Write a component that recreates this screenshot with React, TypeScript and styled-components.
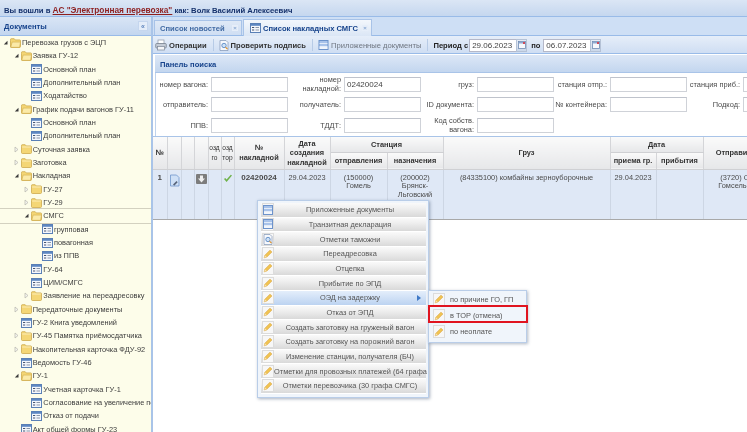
import { FC } from "react";
import styled, { createGlobalStyle } from "styled-components";

const GlobalStyle = createGlobalStyle`
  html, body {
    margin: 0;
    padding: 0;
    background: #fff;
  }
  * {
    box-sizing: border-box;
  }
  svg {
    flex: none;
  }
`;

const Page = styled.div`
  width: 747px;
  height: 432px;
  overflow: hidden;
  position: relative;
  display: flex;
  flex-direction: column;
  font-family: "Liberation Sans", Arial, sans-serif;
  font-size: 7.4px;
  color: #333;
  background: #fff;
  filter: blur(0.3px);
`;

const TopBar = styled.div`
  height: 17px;
  flex: none;
  display: flex;
  align-items: center;
  padding: 4px 0 0 4px;
  background: linear-gradient(#dbe6f5, #c5d7ef);
  border-bottom: 1px solid #99bbe8;
  font-weight: bold;
  font-size: 7.7px;
  color: #15316b;
  white-space: pre;
`;

const TopLink = styled.a`
  color: #8e1f1f;
  font-size: 8.3px;
  text-decoration: underline;
`;

const Body = styled.div`
  flex: 1;
  min-height: 0;
  display: flex;
`;

const Sidebar = styled.div`
  width: 151px;
  flex: none;
  display: flex;
  flex-direction: column;
  background: #fdfdea;
  overflow: hidden;
`;

const SideHead = styled.div`
  height: 19px;
  flex: none;
  display: flex;
  align-items: center;
  justify-content: space-between;
  padding: 0 3px 0 4px;
  background: linear-gradient(#d9e5f5, #c3d6ef);
  border-bottom: 1px solid #99bbe8;
  font-size: 7.6px;
  font-weight: bold;
  color: #15428b;
`;

const Collapse = styled.span`
  width: 10px;
  height: 10px;
  display: flex;
  align-items: center;
  justify-content: center;
  background: #e4edf9;
  border: 1px solid #c5d6ee;
  color: #5f86bd;
  font-size: 7px;
  line-height: 1;
`;

const Tree = styled.div`
  flex: 1;
  overflow: hidden;
`;

const TreeRow = styled.div<{ $level: number; $selected?: boolean }>`
  height: 13.33px;
  display: flex;
  align-items: center;
  white-space: nowrap;
  padding-left: ${(p) => 3 + p.$level * 10.67}px;
  color: #3c3c3c;
  box-shadow: ${(p) => (p.$selected ? "0 -1px 0 #d3d1c0, 0 1px 0 #d3d1c0" : "none")};
`;

const Arrow = styled.span`
  width: 7px;
  flex: none;
  display: flex;
  align-items: center;
`;

const TreeLabel = styled.span`
  margin-left: 1px;
`;

const Splitter = styled.div`
  width: 2px;
  flex: none;
  background: #a9c4e8;
`;

const Main = styled.div`
  flex: 1;
  min-width: 0;
  display: flex;
  flex-direction: column;
  overflow: hidden;
`;

const TabStrip = styled.div`
  height: 19px;
  flex: none;
  display: flex;
  align-items: flex-end;
  padding-left: 1px;
  gap: 1px;
  background: #cedff5;
  border-bottom: 1px solid #99bbe8;
`;

const Tab = styled.div<{ $active?: boolean }>`
  height: ${(p) => (p.$active ? 17 : 15)}px;
  width: ${(p) => (p.$active ? 129 : 88)}px;
  display: flex;
  align-items: center;
  gap: 2px;
  padding: 0 3px 0 ${(p) => (p.$active ? 6 : 5)}px;
  margin-bottom: ${(p) => (p.$active ? -1 : 0)}px;
  border: 1px solid #a8c3e8;
  border-bottom: none;
  background: ${(p) => (p.$active ? "linear-gradient(#f3f7fc, #dbe6f5)" : "linear-gradient(#dfe9f6, #cfdef3)")};
  font-size: 7.6px;
  font-weight: bold;
  color: ${(p) => (p.$active ? "#15428b" : "#416aa3")};
  white-space: nowrap;
`;

const TabClose = styled.span`
  margin-left: auto;
  width: 6px;
  height: 6px;
  display: flex;
  align-items: center;
  justify-content: center;
  font-size: 6px;
  line-height: 1;
  color: #8aa8d2;
  background: #e6eef9;
`;

const Toolbar = styled.div`
  height: 18px;
  flex: none;
  display: flex;
  align-items: center;
  padding: 1px 0 0 2px;
  background: linear-gradient(#e6eef9, #cfdef3);
  border-bottom: 1px solid #99bbe8;
  font-size: 7.6px;
  white-space: nowrap;
`;

const ToolButton = styled.span<{ $muted?: boolean }>`
  display: flex;
  align-items: center;
  gap: 2px;
  font-weight: ${(p) => (p.$muted ? "normal" : "bold")};
  color: ${(p) => (p.$muted ? "#6f7680" : "#333")};
`;

const ToolSep = styled.span`
  width: 1px;
  height: 12px;
  margin: 0 5px 0 6px;
  background: #b7cbe6;
`;

const PeriodLabel = styled.span<{ $gap: number; $tail: number }>`
  font-weight: bold;
  color: #222;
  margin: 0 ${(p) => p.$tail}px 0 ${(p) => p.$gap}px;
`;

const DateField = styled.span`
  width: 58px;
  height: 13px;
  display: flex;
  background: #fff;
  border: 1px solid #b5b8c8;
  align-items: center;
  padding-left: 2px;
  font-size: 8px;
  color: #444;
  position: relative;
`;

const DateTrigger = styled.span`
  position: absolute;
  right: -1px;
  top: -1px;
  width: 11px;
  height: 13px;
  display: flex;
  align-items: center;
  justify-content: center;
  background: linear-gradient(#e6edf7, #cbd8ea);
  border: 1px solid #b5c2d6;
`;

const SearchPanel = styled.div`
  flex: none;
  margin: 1px 0 0 2px;
  display: flex;
  flex-direction: column;
  width: 700px;
`;

const SearchHead = styled.div`
  height: 18px;
  display: flex;
  align-items: center;
  padding: 1px 0 0 5px;
  background: linear-gradient(#dce7f6, #c3d6ef);
  border-bottom: 1px solid #a9c4e8;
  font-size: 7.6px;
  font-weight: bold;
  color: #15428b;
`;

const SearchForm = styled.div`
  height: 63px;
  padding-top: 1px;
  display: grid;
  grid-template-columns: repeat(5, 56px 77px);
  grid-auto-rows: 20.5px;
  background: #fff;
  box-shadow: inset 1px 0 0 #c0d3ec;
`;

const FieldLabel = styled.label`
  display: flex;
  align-items: center;
  justify-content: flex-end;
  text-align: right;
  padding-right: 3px;
  line-height: 9px;
  color: #4a4a4a;
  white-space: pre-line;
`;

const FieldInput = styled.div`
  height: 15px;
  align-self: center;
  display: flex;
  align-items: center;
  padding-left: 2px;
  border: 1px solid #cfd2d8;
  border-top-color: #bfc3cc;
  background: #fff;
  font-size: 8px;
  color: #444;
`;

const GridWrap = styled.div`
  flex: 1;
  min-height: 0;
  overflow: hidden;
  border-top: 1px solid #a9c4e8;
`;

const Table = styled.table`
  table-layout: fixed;
  border-collapse: collapse;
  width: 624px;
`;

const HeadCell = styled.th<{ $h?: number }>`
  height: ${(p) => p.$h ?? 16}px;
  padding: 0 1px;
  text-align: center;
  font-size: 7.4px;
  font-weight: bold;
  color: #333;
  line-height: 9.5px;
  background: linear-gradient(#fafafa, #e6e7e9);
  border-right: 1px solid #d4d5d8;
  border-bottom: 1px solid #cfd0d3;
  white-space: pre-line;
`;

const ThinHeadCell = styled(HeadCell)`
  font-size: 6.6px;
  font-weight: normal;
  padding: 0;
`;

const BodyRow = styled.tr`
  height: 50px;
  background: #dfe8f6;
`;

const BodyCell = styled.td<{ $bold?: boolean }>`
  padding: 4px 1px 0;
  vertical-align: top;
  text-align: center;
  line-height: 8.7px;
  color: #4a4a4a;
  font-size: ${(p) => (p.$bold ? 8 : 7.4)}px;
  font-weight: ${(p) => (p.$bold ? "bold" : "normal")};
  border-right: 1px solid #cdd6e4;
  border-bottom: 1px solid #a8a8a8;
  overflow: hidden;
`;

const Menu = styled.div`
  position: absolute;
  left: 257px;
  top: 200px;
  width: 172px;
  padding: 2px 2px 3px 3px;
  display: flex;
  flex-direction: column;
  background: #f0f5fb;
  border: 1px solid #b9cde8;
  box-shadow: 1px 1px 3px rgba(60, 80, 110, 0.45);
`;

const MenuItem = styled.div<{ $active?: boolean }>`
  height: 14.67px;
  display: flex;
  align-items: center;
  position: relative;
  padding-left: 1px;
  background: ${(p) =>
    p.$active
      ? "linear-gradient(#e4eefb, #bcd3f1)"
      : "linear-gradient(#fafafa 0%, #eeeeee 40%, #d9d9d9 100%)"};
  border-bottom: 1px solid #fff;
  color: #555;
  white-space: nowrap;
`;

const MenuText = styled.span`
  flex: 1;
  text-align: center;
  font-size: 7.4px;
`;

const MenuArrow = styled.span`
  position: absolute;
  right: 5px;
  top: 4px;
  border-left: 4px solid #3f79c6;
  border-top: 3px solid transparent;
  border-bottom: 3px solid transparent;
`;

const IconBox = styled.span`
  width: 12px;
  height: 13px;
  flex: none;
  display: flex;
  align-items: center;
  justify-content: center;
  background: #f7f7f7;
  border: 1px solid #dcdcdc;
`;

const SubMenu = styled.div`
  position: absolute;
  left: 428px;
  top: 290px;
  width: 99px;
  height: 53px;
  padding: 0 0 0 2px;
  display: flex;
  flex-direction: column;
  background: #f0f5fb;
  border: 1px solid #b9cde8;
  box-shadow: 1px 1px 3px rgba(60, 80, 110, 0.4);
`;

const SubItem = styled.div`
  height: 16.4px;
  display: flex;
  align-items: center;
  gap: 5px;
  padding-left: 2px;
  color: #555;
  white-space: nowrap;
`;

const RedFrame = styled.div`
  position: absolute;
  left: 428px;
  top: 305px;
  width: 100px;
  height: 18px;
  border: 2px solid #e0141f;
`;

const FolderIcon: FC<{ open?: boolean }> = ({ open }) => (
  <svg width="11" height="10" viewBox="0 0 11 10">
    <path d="M.5 2.5V8.6c0 .5.3.9.9.9h8.2c.5 0 .9-.4.9-.9V2.6c0-.4-.3-.7-.7-.7H5.2L4.2.7H1.2C.8.7.5 1 .5 1.4z" fill="#f4d675" stroke="#c9a23f" strokeWidth=".7" />
    {open ? (
      <path d="M.8 9.3l1.3-5.2h8.4l-1 5.2z" fill="#fbeaa8" stroke="#c9a23f" strokeWidth=".5" />
    ) : (
      <path d="M1.2 3h8.6" stroke="#fdf1bf" strokeWidth=".9" />
    )}
  </svg>
);

const DocIcon: FC = () => (
  <svg width="11" height="10" viewBox="0 0 11 10">
    <rect x=".5" y=".5" width="10" height="9" fill="#f4f7fc" stroke="#5a80b6" />
    <rect x="1" y="1" width="9" height="1.8" fill="#5d87c2" />
    <path d="M2 4.5h2.2M2 7h2.2" stroke="#44536e" strokeWidth="1.1" />
    <path d="M5.5 4.5h3.5M5.5 7h3.5" stroke="#8b97aa" strokeWidth="1" />
  </svg>
);

const PencilIcon: FC = () => (
  <svg width="10" height="10" viewBox="0 0 10 10">
    <path d="M1.2 8.8l.8-2.6 5-5 1.8 1.8-5 5z" fill="#f2c552" stroke="#d39a2c" strokeWidth=".6" />
    <path d="M1.2 8.8l.8-2.6 1.8 1.8z" fill="#f6e2b4" />
  </svg>
);

const BlueListIcon: FC<{ width?: number }> = ({ width = 10 }) => (
  <svg width={width} height="10" viewBox="0 0 10 10">
    <rect x=".5" y=".5" width="9" height="9" fill="#a9c3ea" stroke="#6d93cb" />
    <path d="M1 3.5h8M1 6.5h8" stroke="#f2f6fc" strokeWidth=".8" />
    <rect x="1" y="7" width="8" height="2" fill="#f2f6fc" />
  </svg>
);

const CheckDocIcon: FC = () => (
  <svg width="10" height="11" viewBox="0 0 10 11">
    <path d="M1 .5h6l2 2v8H1z" fill="#f6f8fc" stroke="#7e93b5" strokeWidth=".7" />
    <circle cx="5" cy="5.5" r="2.2" fill="#cfe2f7" stroke="#4b7fc0" strokeWidth=".8" />
    <path d="M6.5 7.2l2 2" stroke="#d9902d" strokeWidth="1.2" />
  </svg>
);

const PrinterIcon: FC = () => (
  <svg width="12" height="12" viewBox="0 0 12 12">
    <rect x="3" y="1" width="6" height="4" fill="#fff" stroke="#8d97a6" strokeWidth=".7" />
    <rect x=".7" y="4.5" width="10.6" height="4.5" rx="1" fill="#c5ccd6" stroke="#6f7887" strokeWidth=".7" />
    <rect x="2.5" y="7.5" width="7" height="3.5" fill="#f4f5f7" stroke="#7d8696" strokeWidth=".7" />
  </svg>
);

const CalendarIcon: FC = () => (
  <svg width="8" height="8" viewBox="0 0 8 8">
    <rect x=".5" y=".5" width="7" height="7" fill="#f6f8fc" stroke="#6f8cb5" strokeWidth=".8" />
    <rect x="1" y="1" width="6" height="1.5" fill="#8eaad2" />
    <rect x="5" y="1" width="2" height="2" fill="#d04a5a" />
  </svg>
);

const AttachedIcon: FC = () => (
  <svg width="11" height="13" viewBox="0 0 11 13">
    <path d="M1.5 1h6l2.5 2.5V12H1.5z" fill="#cfe0f6" stroke="#6e96cc" strokeWidth=".8" />
    <path d="M4 10.5l3.5-3.5 1.2 1.2-3.5 3.5z" fill="#58647a" />
  </svg>
);

const DownIcon: FC = () => (
  <svg width="11" height="10" viewBox="0 0 11 10">
    <rect width="11" height="10" rx="1" fill="#7c7c7c" />
    <path d="M4 1.5h3v3h2L5.5 8.5 2 4.5h2z" fill="#eee" />
  </svg>
);

const CheckIcon: FC = () => (
  <svg width="10" height="9" viewBox="0 0 10 9">
    <path d="M1 5l2.6 3L9 1.5 7.8.8 3.6 5.4 2.2 3.9z" fill="#6fb24a" />
  </svg>
);

const TreeArrow: FC<{ open?: boolean }> = ({ open }) =>
  open ? (
    <svg width="5" height="5" viewBox="0 0 5 5">
      <path d="M4.5.8v3.7H.8z" fill="#3a3a3a" />
    </svg>
  ) : (
    <svg width="5" height="7" viewBox="0 0 5 7">
      <path d="M1 1l3 2.5L1 6z" fill="#f6f6f0" stroke="#b4b4ac" strokeWidth=".7" />
    </svg>
  );

type TreeNode = { label: string; level: number; kind: "open" | "closed" | "leaf"; selected?: boolean };

const tree: TreeNode[] = [
  { label: "Перевозка грузов с ЭЦП", level: 0, kind: "open" },
  { label: "Заявка ГУ-12", level: 1, kind: "open" },
  { label: "Основной план", level: 2, kind: "leaf" },
  { label: "Дополнительный план", level: 2, kind: "leaf" },
  { label: "Ходатайство", level: 2, kind: "leaf" },
  { label: "График подачи вагонов ГУ-11", level: 1, kind: "open" },
  { label: "Основной план", level: 2, kind: "leaf" },
  { label: "Дополнительный план", level: 2, kind: "leaf" },
  { label: "Суточная заявка", level: 1, kind: "closed" },
  { label: "Заготовка", level: 1, kind: "closed" },
  { label: "Накладная", level: 1, kind: "open" },
  { label: "ГУ-27", level: 2, kind: "closed" },
  { label: "ГУ-29", level: 2, kind: "closed" },
  { label: "СМГС", level: 2, kind: "open", selected: true },
  { label: "групповая", level: 3, kind: "leaf" },
  { label: "повагонная", level: 3, kind: "leaf" },
  { label: "из ППВ", level: 3, kind: "leaf" },
  { label: "ГУ-64", level: 2, kind: "leaf" },
  { label: "ЦИМ/СМГС", level: 2, kind: "leaf" },
  { label: "Заявление на переадресовку", level: 2, kind: "closed" },
  { label: "Передаточные документы", level: 1, kind: "closed" },
  { label: "ГУ-2 Книга уведомлений", level: 1, kind: "leaf" },
  { label: "ГУ-45 Памятка приёмосдатчика", level: 1, kind: "closed" },
  { label: "Накопительная карточка ФДУ-92", level: 1, kind: "closed" },
  { label: "Ведомость ГУ-46", level: 1, kind: "leaf" },
  { label: "ГУ-1", level: 1, kind: "open" },
  { label: "Учетная карточка ГУ-1", level: 2, kind: "leaf" },
  { label: "Согласование на увеличение подачи", level: 2, kind: "leaf" },
  { label: "Отказ от подачи", level: 2, kind: "leaf" },
  { label: "Акт общей формы ГУ-23", level: 1, kind: "leaf" },
];

const fields: [string, string][] = [
  ["номер вагона:", ""],
  ["номер\nнакладной:", "02420024"],
  ["груз:", ""],
  ["станция отпр.:", ""],
  ["станция приб.:", ""],
  ["отправитель:", ""],
  ["получатель:", ""],
  ["ID документа:", ""],
  ["№ контейнера:", ""],
  ["Подкод:", ""],
  ["ППВ:", ""],
  ["ТДДТ:", ""],
  ["Код собств.\nвагона:", ""],
];

const columns = [14, 14, 13, 14, 13, 13, 50, 46, 57, 56, 167, 46, 47, 74];

const menuItems: { label: string; icon: "list" | "check" | "pencil"; active?: boolean }[] = [
  { label: "Приложенные документы", icon: "list" },
  { label: "Транзитная декларация", icon: "list" },
  { label: "Отметки таможни", icon: "check" },
  { label: "Переадресовка", icon: "pencil" },
  { label: "Отцепка", icon: "pencil" },
  { label: "Прибытие по ЭПД", icon: "pencil" },
  { label: "ОЭД на задержку", icon: "pencil", active: true },
  { label: "Отказ от ЭПД", icon: "pencil" },
  { label: "Создать заготовку на груженый вагон", icon: "pencil" },
  { label: "Создать заготовку на порожний вагон", icon: "pencil" },
  { label: "Изменение станции, получателя (БЧ)", icon: "pencil" },
  { label: "Отметки для провозных платежей (64 графа", icon: "pencil" },
  { label: "Отметки перевозчика (30 графа СМГС)", icon: "pencil" },
];

const menuIcons = {
  list: <BlueListIcon />,
  check: <CheckDocIcon />,
  pencil: <PencilIcon />,
};

const subItems = ["по причине ГО, ГП", "в ТОР (отмена)", "по неоплате"];

function FieldGroup({ label, value }: { label: string; value: string }) {
  return (
    <>
      <FieldLabel>{label}</FieldLabel>
      <FieldInput>{value}</FieldInput>
    </>
  );
}

export default function App() {
  return (
    <Page>
      <GlobalStyle />
      <TopBar>
        Вы вошли в <TopLink>АС "Электронная перевозка"</TopLink> как: Волк Василий Алексеевич
      </TopBar>
      <Body>
        <Sidebar>
          <SideHead>
            Документы
            <Collapse>«</Collapse>
          </SideHead>
          <Tree>
            {tree.map((node, i) => (
              <TreeRow key={i} $level={node.level} $selected={node.selected}>
                <Arrow>{node.kind !== "leaf" && <TreeArrow open={node.kind === "open"} />}</Arrow>
                {node.kind === "leaf" ? <DocIcon /> : <FolderIcon open={node.kind === "open"} />}
                <TreeLabel>{node.label}</TreeLabel>
              </TreeRow>
            ))}
          </Tree>
        </Sidebar>
        <Splitter />
        <Main>
          <TabStrip>
            <Tab>
              Список новостей
              <TabClose>×</TabClose>
            </Tab>
            <Tab $active>
              <DocIcon />
              Список накладных СМГС
              <TabClose>×</TabClose>
            </Tab>
          </TabStrip>
          <Toolbar>
            <ToolButton>
              <PrinterIcon />
              Операции
            </ToolButton>
            <ToolSep />
            <ToolButton>
              <CheckDocIcon />
              Проверить подпись
            </ToolButton>
            <ToolSep />
            <ToolButton $muted>
              <BlueListIcon width={11} />
              Приложенные документы
            </ToolButton>
            <ToolSep />
            <PeriodLabel $gap={0} $tail={1}>Период с</PeriodLabel>
            <DateField>
              29.06.2023
              <DateTrigger>
                <CalendarIcon />
              </DateTrigger>
            </DateField>
            <PeriodLabel $gap={4} $tail={3}>по</PeriodLabel>
            <DateField>
              06.07.2023
              <DateTrigger>
                <CalendarIcon />
              </DateTrigger>
            </DateField>
          </Toolbar>
          <SearchPanel>
            <SearchHead>Панель поиска</SearchHead>
            <SearchForm>
              {fields.map(([label, value], i) => (
                <FieldGroup key={i} label={label} value={value} />
              ))}
            </SearchForm>
          </SearchPanel>
          <GridWrap>
            <Table>
              <colgroup>
                {columns.map((w, i) => (
                  <col key={i} width={w} />
                ))}
              </colgroup>
              <thead>
                <tr>
                  <HeadCell rowSpan={2}>№</HeadCell>
                  <HeadCell rowSpan={2} />
                  <HeadCell rowSpan={2} />
                  <HeadCell rowSpan={2} />
                  <ThinHeadCell rowSpan={2}>озд го</ThinHeadCell>
                  <ThinHeadCell rowSpan={2}>озд тор</ThinHeadCell>
                  <HeadCell rowSpan={2}>{"№\nнакладной"}</HeadCell>
                  <HeadCell rowSpan={2}>{"Дата\nсоздания\nнакладной"}</HeadCell>
                  <HeadCell colSpan={2} $h={15}>Станция</HeadCell>
                  <HeadCell rowSpan={2}>Груз</HeadCell>
                  <HeadCell colSpan={2} $h={15}>Дата</HeadCell>
                  <HeadCell rowSpan={2}>Отправитель</HeadCell>
                </tr>
                <tr>
                  <HeadCell $h={17}>отправления</HeadCell>
                  <HeadCell $h={17}>назначения</HeadCell>
                  <HeadCell $h={17}>приема гр.</HeadCell>
                  <HeadCell $h={17}>прибытия</HeadCell>
                </tr>
              </thead>
              <tbody>
                <BodyRow>
                  <BodyCell $bold>1</BodyCell>
                  <BodyCell><AttachedIcon /></BodyCell>
                  <BodyCell />
                  <BodyCell><DownIcon /></BodyCell>
                  <BodyCell />
                  <BodyCell><CheckIcon /></BodyCell>
                  <BodyCell $bold>02420024</BodyCell>
                  <BodyCell>29.04.2023</BodyCell>
                  <BodyCell>(150000)<br />Гомель</BodyCell>
                  <BodyCell>(200002)<br />Брянск-<br />Льговский</BodyCell>
                  <BodyCell>(84335100) комбайны зерноуборочные</BodyCell>
                  <BodyCell>29.04.2023</BodyCell>
                  <BodyCell />
                  <BodyCell>(3720) ОАО<br />Гомсельмаш</BodyCell>
                </BodyRow>
              </tbody>
            </Table>
          </GridWrap>
        </Main>
      </Body>
      <Menu>
        {menuItems.map((item) => (
          <MenuItem key={item.label} $active={item.active}>
            <IconBox>{menuIcons[item.icon]}</IconBox>
            <MenuText>{item.label}</MenuText>
            {item.active && <MenuArrow />}
          </MenuItem>
        ))}
      </Menu>
      <SubMenu>
        {subItems.map((label) => (
          <SubItem key={label}>
            <IconBox><PencilIcon /></IconBox>
            {label}
          </SubItem>
        ))}
      </SubMenu>
      <RedFrame />
    </Page>
  );
}
